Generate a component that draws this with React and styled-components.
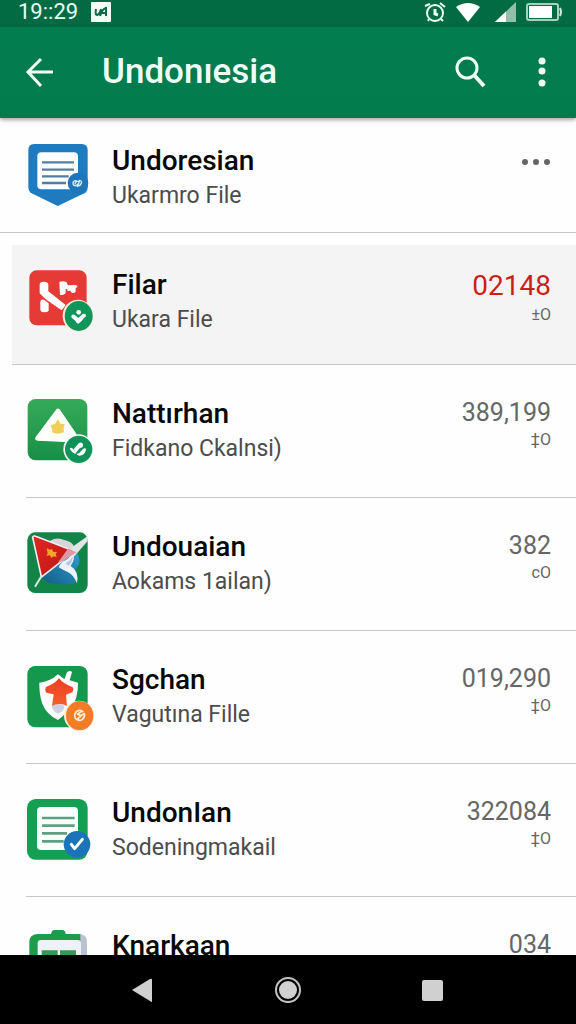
import styled, { createGlobalStyle } from 'styled-components'

const GlobalStyle = createGlobalStyle`
  * {
    box-sizing: border-box;
  }

  body {
    margin: 0;
    background: #fdfefd;
    font-family: Roboto, 'Liberation Sans', sans-serif;
  }

  button {
    padding: 0;
    border: 0;
    background: none;
    color: inherit;
    font: inherit;
    cursor: pointer;
  }

  svg {
    display: block;
    overflow: visible;
  }
`

const Screen = styled.div`
  display: flex;
  flex-direction: column;
  height: 100vh;
`

const StatusBar = styled.div`
  display: flex;
  flex-shrink: 0;
  align-items: center;
  height: 27px;
  padding: 0 14px 4px 18px;
  background: #026b44;
  color: #e6fff4;
`

const Clock = styled.time`
  margin-right: 13px;
  font-size: 22px;
  line-height: 24px;
`

const StatusIcons = styled.div`
  display: flex;
  align-items: center;
  margin-left: auto;
  gap: 10px;
`

const AppBar = styled.header`
  position: relative;
  display: flex;
  flex-shrink: 0;
  align-items: center;
  height: 91px;
  padding: 0 24px 2px;
  background: linear-gradient(#037e51, #027a4c);
  box-shadow: 0 2px 4px rgba(0, 0, 0, 0.35);
  color: #effff8;
`

const AppTitle = styled.h1`
  flex: 1;
  margin: 0 0 0 46px;
  font-size: 35px;
  font-weight: 500;
  line-height: 44px;
`

const SearchButton = styled.button`
  margin-right: 46px;
`

const List = styled.ul`
  flex: 1;
  min-height: 0;
  margin: 0;
  padding: 0;
  overflow-y: auto;
  scrollbar-width: none;
  list-style: none;
`

const Row = styled.li`
  display: flex;
  align-items: center;
  margin-left: 26px;
  padding: 31px 25px 31px 0;
  border-bottom: 1px solid #c6c8c8;
`

const FirstRow = styled(Row)`
  margin: 0 0 12px;
  padding: 25px 25px 19px 26px;
`

const ActiveRow = styled(Row)`
  margin-left: 12px;
  padding: 22px 25px 27px 14px;
  background: #f4f4f4;
`

const Texts = styled.div`
  flex: 1;
  min-width: 0;
  margin-left: 18px;
  white-space: nowrap;
`

const Name = styled.h2`
  margin: 0;
  color: #080808;
  font-size: 28px;
  font-weight: 500;
  line-height: 36px;
`

const Detail = styled.p`
  margin: 0;
  color: #4c4c4c;
  font-size: 23px;
  line-height: 34px;
`

const Figures = styled.div`
  align-self: flex-start;
  color: #666;
  text-align: right;
`

const Amount = styled.div`
  color: ${(p) => (p.$alert ? '#cb1f1b' : '#666')};
  font-size: ${(p) => (p.$alert ? '28px' : '25px')};
  line-height: ${(p) => (p.$alert ? '38px' : '34px')};
`

const Change = styled.div`
  font-size: 16px;
  line-height: 20px;
`

const MoreButton = styled.button`
  align-self: flex-start;
  height: 38px;
  color: #666;
`

const NavBar = styled.nav`
  display: flex;
  flex-shrink: 0;
  justify-content: center;
  height: 69px;
  background: #000;
  color: #d0d0d0;
`

const NavButton = styled.button`
  display: flex;
  flex: 0 0 25%;
  align-items: center;
  justify-content: center;
`

const IconSvg = ({ viewBox, children }) => (
  <svg width='68' height='66' viewBox={viewBox} fill='none' aria-hidden='true'>
    {children}
  </svg>
)

const DocumentIcon = () => (
  <IconSvg viewBox='78 75 204 198'>
    <path
      d='M102 72h143q18 0 18 18v112q0 12-10 18l-80 38-78-38q-10-6-10-18V90q0-18 17-18z'
      fill='#1e7bc0'
    />
    <rect x='112' y='97' width='122' height='111' rx='12' fill='#fbfdff' />
    <path d='M126 127h96M126 149h96M126 169h80M126 189h72' stroke='#557f9f' strokeWidth='7' />
    <circle cx='234' cy='189' r='31' fill='#1f75b9' />
    <path
      d='M229 182q-10 0-10 8t9 7l6-5M225 192l4-8h9l-5 14M238 181q9 1 6 9t-12 9'
      stroke='#d5efff'
      strokeWidth='4'
      strokeLinecap='round'
    />
  </IconSvg>
)

const FilarIcon = () => (
  <IconSvg viewBox='78 87 204 198'>
    <rect x='88' y='91' width='172' height='165' rx='22' fill='#e53a35' />
    <path d='M119 132q2-7 12-7 13 0 14 8v21l52 41-12 16-48-33-18-18z' fill='#fff' />
    <path d='M121 185q2-10 12-5l13 10v22q-5 6-20 4-5-2-5-8z' fill='#fff' />
    <path
      d='M178 126q10-4 21 0l5 10 24-1q5 1 4 6l-5 3v11q-4 5-11 4l-5-7-8 1-3-7-3 2v12q-8 8-17 4z'
      fill='#fff'
    />
    <ellipse cx='234' cy='227' rx='46' ry='48' fill='#fbefd8' />
    <ellipse cx='236' cy='228' rx='42' ry='45' fill='#12955a' />
    <circle cx='236' cy='217' r='7' fill='#fff' />
    <path
      d='M215 226q5-6 12 1l8 7 13-12q7-3 10 3 1 6-6 9l-8 10-9 7q-6-1-9-9l-11-9q-2-4 0-7z'
      fill='#fff'
    />
  </IconSvg>
)

const TriangleIcon = () => (
  <IconSvg viewBox='78 54 204 198'>
    <defs>
      <linearGradient id='triangleGreen' x1='0' y1='0' x2='0' y2='1'>
        <stop offset='0' stopColor='#36ab58' />
        <stop offset='1' stopColor='#178f49' />
      </linearGradient>
    </defs>
    <rect x='83' y='57' width='179' height='184' rx='24' fill='url(#triangleGreen)' />
    <path
      d='M168 89q6-7 12 0l47 69q9 16 0 29-8 4-18 0l-96-5q-11-2-6-11z'
      fill='#fcfffa'
    />
    <path
      d='M174 118l7 13 13 1-3 13 1 12-17 4-17-3-2-12-4-10 13-4z'
      fill='#f1ce58'
    />
    <circle cx='235' cy='208' r='45' fill='#effff4' />
    <circle cx='236' cy='208' r='41' fill='#119258' />
    <path d='M209 207q4-7 10 0l9 8-2 7q-9-3-17-15z' fill='#fff' />
    <path
      d='M221 208l15-18q8-6 13 2l-1 9-9 4-11 13M229 222q7 8 16 4 13-7 13-20-7-3-12 4-6 10-17 12z'
      fill='#fff'
    />
  </IconSvg>
)

const FlagIcon = () => (
  <IconSvg viewBox='78 63 204 198'>
    <defs>
      <linearGradient id='flagRed' x1='0' y1='0' x2='1' y2='1'>
        <stop offset='0' stopColor='#e32620' />
        <stop offset='1' stopColor='#b71719' />
      </linearGradient>
      <linearGradient id='flagBlue' x1='1' y1='0' x2='0' y2='1'>
        <stop offset='0' stopColor='#2f9fd0' />
        <stop offset='1' stopColor='#145c86' />
      </linearGradient>
    </defs>
    <rect x='82' y='67' width='181' height='182' rx='24' fill='#128447' />
    <path d='M150 92q22-12 43-2 22 4 30 20l-10 20-20 6z' fill='#d9d3dc' />
    <path
      d='M127 202l96-86q20 22 14 47-3 10-11 14l6 20q0 16-14 25-50 4-75-6-10-4-16-14z'
      fill='url(#flagBlue)'
    />
    <path
      d='M176 172q8-18 22-22 14-8 20-26 10 22-6 44 26 16 19 52-10-26-28-34-14-6-27-14z'
      fill='#eef2f9'
    />
    <path d='M196 160q16-8 22-22 0 18-12 30z' fill='#b5c9e2' />
    <path d='M204 120l59-42v15l-42 48z' fill='#e4e4e6' />
    <path
      d='M98 82q2-6 9-3l113 43-24 23-70 55q-4-4-4-9z'
      fill='url(#flagRed)'
      stroke='#f1edf0'
      strokeWidth='5'
      strokeLinejoin='round'
    />
    <path d='M205 115l24 12-34 23-22 9z' fill='#dc9aa3' />
    <path d='M126 196l-21 34' stroke='#dbeadf' strokeWidth='6' />
    <path
      d='M140 115l10 4 6-2 3 8 12 1-4 6 3 9-10-2-6 5-4-8-11 1 4-7z'
      fill='#f6a624'
    />
  </IconSvg>
)

const ShieldIcon = () => (
  <IconSvg viewBox='78 57 204 198'>
    <defs>
      <linearGradient id='arrowRed' x1='0' y1='0' x2='0' y2='1'>
        <stop offset='0' stopColor='#ee3c24' />
        <stop offset='1' stopColor='#f2622c' />
      </linearGradient>
    </defs>
    <rect x='82' y='63' width='181' height='184' rx='24' fill='#15974e' />
    <path
      d='M118 113q32-3 56-25l19 15 8-21q9-8 15-1-4 15-7 25l25 7q1 45-21 80l-39 32q-35-17-47-49-10-29-9-63z'
      fill='#fff'
    />
    <path d='M155 182q20-10 38 0-1 18-19 24-15-6-19-24z' fill='#cdd0e2' />
    <path
      d='M177 100q12 16 40 26 6 6 0 16l-19 7 3 34q-13-7-24-6-11 0-21 5l5-34-22-5q-6-8-1-17 27-10 39-26z'
      fill='url(#arrowRed)'
    />
    <circle cx='237' cy='212' r='45' fill='#f2f0dc' />
    <ellipse cx='239' cy='212' rx='41' ry='44' fill='#f57c26' />
    <path
      d='M249 200q-12-8-21 1-7 11-1 20 10 9 20 2 9-8 6-17l-9 4M244 200l-11 7 10 6-9 7'
      stroke='#fff4dc'
      strokeWidth='5'
      strokeLinecap='round'
      strokeLinejoin='round'
    />
  </IconSvg>
)

const CheckedListIcon = () => (
  <IconSvg viewBox='78 51 204 198'>
    <rect x='81' y='57' width='182' height='182' rx='26' fill='#13a052' />
    <rect x='111' y='81' width='123' height='129' rx='12' fill='#fbfffc' />
    <path d='M126 114h98M126 137h98M126 160h75M126 184h65' stroke='#5ea083' strokeWidth='8' />
    <circle cx='231' cy='193' r='40' fill='#1b73b8' />
    <path
      d='M214 193l10 13 23-28'
      stroke='#fff'
      strokeWidth='9'
      strokeLinecap='round'
      strokeLinejoin='round'
    />
  </IconSvg>
)

const ClipboardIcon = () => (
  <IconSvg viewBox='78 105 204 198'>
    <path d='M205 117h34q22 2 22 24v151h-56z' fill='#b9c2d0' />
    <path
      d='M112 117h41q2-12 10-12h24q9 0 10 12h44v175H112q-24 0-24-24V141q0-22 24-24z'
      fill='#1d9c4c'
    />
    <rect x='113' y='135' width='130' height='150' rx='10' fill='#eef1f6' />
    <path d='M125 166h48v50h-48zM180 166h48v50h-48z' fill='#349957' />
  </IconSvg>
)

const entries = [
  { name: 'Nattırhan', detail: 'Fidkano Ckalnsi)', amount: '389,199', change: '‡O', Icon: TriangleIcon },
  { name: 'Undouaian', detail: 'Aokams 1ailan)', amount: '382', change: 'cO', Icon: FlagIcon },
  { name: 'Sgchan', detail: 'Vagutına Fille', amount: '019,290', change: '‡O', Icon: ShieldIcon },
  { name: 'UndonIan', detail: 'Sodeningmakail', amount: '322084', change: '‡O', Icon: CheckedListIcon },
  { name: 'Knarkaan', detail: 'Ukara File', amount: '034', change: '‡O', Icon: ClipboardIcon },
]

const Label = ({ name, detail }) => (
  <Texts>
    <Name>{name}</Name>
    <Detail>{detail}</Detail>
  </Texts>
)

export default function App() {
  return (
    <Screen>
      <GlobalStyle />
      <StatusBar>
        <Clock>19::29</Clock>
        <svg width='20' height='20' viewBox='0 0 20 20' fill='none' aria-hidden='true'>
          <rect width='20' height='20' rx='1' fill='#f2fff9' />
          <path d='M5 7q-1 6 1 6 3-1 4-6M9 14q2-7 6-8v8M11 11h4' stroke='#12694a' strokeWidth='2' />
        </svg>
        <StatusIcons>
          <svg width='21' height='20' viewBox='0 0 21 20' fill='none' stroke='#eafff6' aria-hidden='true'>
            <circle cx='10' cy='11' r='8' strokeWidth='2' />
            <path d='M0 4l5-2M15 1l5 4M4 17l-1 2M16 17l2 2' strokeWidth='2' />
            <path d='M10 7v5l3 1' strokeWidth='3' />
          </svg>
          <svg width='24' height='20' viewBox='0 0 24 20' aria-hidden='true'>
            <path d='M0 5Q12-3 24 5L12 20z' fill='#fff' />
          </svg>
          <svg width='26' height='20' viewBox='-5 0 26 20' aria-hidden='true'>
            <path d='M21 0v20H0z' fill='#8fc0aa' />
            <path d='M11 9.500v10.500H0z' fill='#fff' />
          </svg>
          <svg width='36' height='18' viewBox='0 0 36 18' fill='none' aria-hidden='true'>
            <rect x='1' y='1' width='31' height='16' rx='2' stroke='#a5d3be' strokeWidth='2' />
            <rect x='3' y='3' width='23' height='12' fill='#fff' />
            <path d='M34 5q2 4 0 8' stroke='#c7e8d9' strokeWidth='2' />
          </svg>
        </StatusIcons>
      </StatusBar>

      <AppBar>
        <button type='button' aria-label='Back'>
          <svg width='32' height='32' viewBox='0 0 32 32' fill='none' stroke='currentColor' strokeWidth='3'>
            <path d='M17 3L4 16l13 14M4 16h25' />
          </svg>
        </button>
        <AppTitle>Undonıesia</AppTitle>
        <SearchButton type='button' aria-label='Search'>
          <svg width='32' height='32' viewBox='0 0 32 32' fill='none' stroke='currentColor' strokeWidth='3'>
            <circle cx='13' cy='12' r='10' />
            <path d='M20 19l10 11' strokeWidth='4' />
          </svg>
        </SearchButton>
        <button type='button' aria-label='More options'>
          <svg width='20' height='32' viewBox='0 0 20 32' fill='currentColor'>
            <circle cx='10' cy='5' r='3.500' />
            <circle cx='10' cy='15' r='3.500' />
            <circle cx='10' cy='27' r='3.500' />
          </svg>
        </button>
      </AppBar>

      <List>
        <FirstRow>
          <DocumentIcon />
          <Label name='Undoresian' detail='Ukarmro File' />
          <MoreButton type='button' aria-label='More actions for Undoresian'>
            <svg width='30' height='8' viewBox='0 0 30 8' fill='currentColor'>
              <circle cx='4' cy='4' r='3' />
              <circle cx='15' cy='4' r='3' />
              <circle cx='26' cy='4' r='3' />
            </svg>
          </MoreButton>
        </FirstRow>
        <ActiveRow>
          <FilarIcon />
          <Label name='Filar' detail='Ukara File' />
          <Figures>
            <Amount $alert>02148</Amount>
            <Change>±O</Change>
          </Figures>
        </ActiveRow>
        {entries.map(({ name, detail, amount, change, Icon }) => (
          <Row key={name}>
            <Icon />
            <Label name={name} detail={detail} />
            <Figures>
              <Amount>{amount}</Amount>
              <Change>{change}</Change>
            </Figures>
          </Row>
        ))}
      </List>

      <NavBar>
        <NavButton type='button' aria-label='Back'>
          <svg width='24' height='24' viewBox='0 0 24 24' fill='currentColor'>
            <path d='M0 12L18 1q2-1 2 1v21q0 2-2 0z' />
          </svg>
        </NavButton>
        <NavButton type='button' aria-label='Home'>
          <svg width='28' height='28' viewBox='0 0 28 28' fill='none'>
            <circle cx='14' cy='14' r='12' stroke='#c4c4c4' strokeWidth='2' />
            <circle cx='14' cy='14' r='9' fill='currentColor' />
          </svg>
        </NavButton>
        <NavButton type='button' aria-label='Recent apps'>
          <svg width='22' height='22' viewBox='0 0 22 22' fill='currentColor'>
            <rect x='1' y='1' width='21' height='21' rx='2' />
          </svg>
        </NavButton>
      </NavBar>
    </Screen>
  )
}
